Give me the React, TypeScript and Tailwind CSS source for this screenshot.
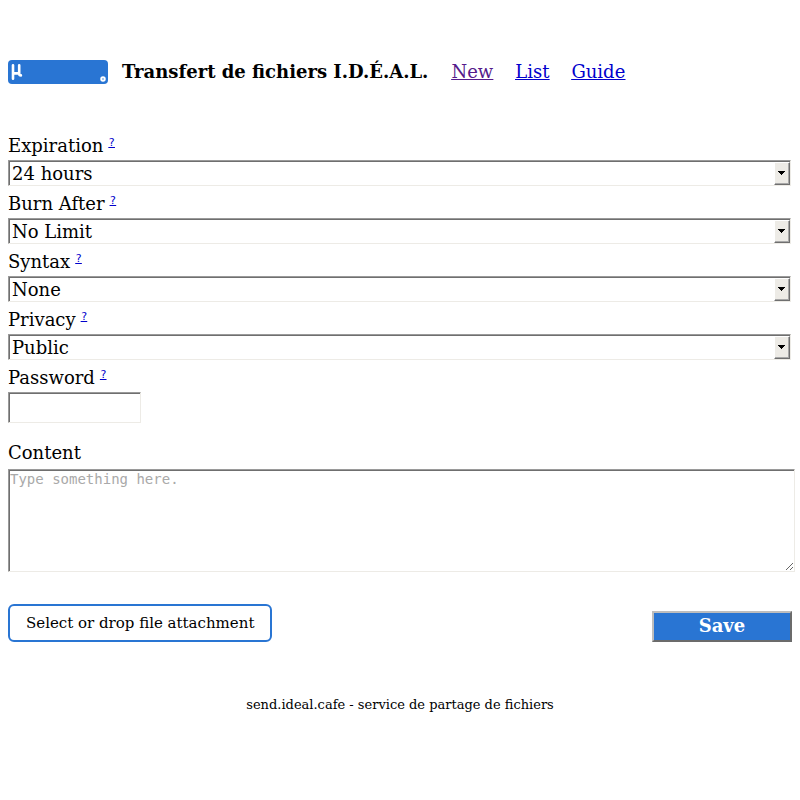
import React, { useState } from "react";

const insetBorder =
  "border border-t-[#9a9a9a] border-l-[#9a9a9a] border-b-[#edebe6] border-r-[#edebe6] shadow-[inset_1px_1px_0_#6f6f6f]";

const selectFields = [
  { id: "expiration", label: "Expiration", options: ["24 hours", "1 hour", "3 days", "1 week"] },
  { id: "burn-after", label: "Burn After", options: ["No Limit", "1", "10", "100"] },
  { id: "syntax", label: "Syntax", options: ["None", "Auto", "Markdown"] },
  { id: "privacy", label: "Privacy", options: ["Public", "Unlisted", "Private"] },
];

const Logo = () => (
  <svg width="100" height="24" viewBox="0 0 100 24" aria-label="Logo">
    <rect width="100" height="24" rx="4" fill="#2975d3" />
    <path
      d="M5 5.2v13.6M5 13.4h6.2M11.2 5.2v8.2q0 2 1.7 2"
      fill="none"
      stroke="#fff"
      strokeWidth="2.6"
      strokeLinecap="round"
      strokeLinejoin="round"
    />
    <circle cx="95" cy="19" r="1.9" fill="#8db6e8" stroke="#fff" strokeWidth="1.7" />
  </svg>
);

const FieldLabel = ({ htmlFor, label }: { htmlFor: string; label: string }) => (
  <div className="flex h-8 items-center pt-1">
    <label htmlFor={htmlFor}>{label}</label>
    <a
      href="/guide"
      className="mb-[7px] ml-[5px] font-['DejaVu_Sans_Mono',monospace] text-[11px] leading-3 text-[#0000cc] underline"
    >
      ?
    </a>
  </div>
);

const SelectField = ({ id, label, options }: { id: string; label: string; options: string[] }) => (
  <div className="mr-px">
    <FieldLabel htmlFor={id} label={label} />
    <div className="relative">
      <select id={id} className={`block h-[26px] w-full appearance-none bg-white pt-px pl-[3px] ${insetBorder}`}>
        {options.map((option) => (
          <option key={option}>{option}</option>
        ))}
      </select>
      <span className="pointer-events-none absolute top-0.5 right-px bottom-px flex w-4 items-center justify-center border border-t-white border-r-[#6f6f6f] border-b-[#6f6f6f] border-l-white bg-[#edebe6] pr-px pb-px shadow-[inset_-1px_-1px_0_#a8a8a8]">
        <svg width="7" height="4" viewBox="0 0 7 4" shapeRendering="crispEdges">
          <path d="M0 0h7v1H6v1H5v1H4v1H3V3H2V2H1V1H0z" />
        </svg>
      </span>
    </div>
  </div>
);

export default function App() {
  const [content, setContent] = useState("");

  return (
    <div className="bg-white px-2 pt-[60px] font-['DejaVu_Serif',serif] text-lg leading-6 text-black">
      {/* Header */}
      <header className="flex items-center">
        <Logo />
        <b className="ml-3.5">Transfert de fichiers I.D.É.A.L.</b>
        <nav className="ml-[23px] flex gap-[22px] text-[#0000cc] underline">
          <a href="/" className="text-[#551a8b]">New</a>
          <a href="/list">List</a>
          <a href="/guide">Guide</a>
        </nav>
      </header>

      <form className="mt-11" onSubmit={(e) => e.preventDefault()}>
        {selectFields.map((field) => (
          <SelectField key={field.id} {...field} />
        ))}
        <FieldLabel htmlFor="password" label="Password" />
        <input id="password" type="password" className={`block h-[31px] w-[133px] ${insetBorder}`} />

        {/* Content */}
        <label htmlFor="content" className="mt-[18px] block">Content</label>
        <textarea
          id="content"
          value={content}
          onChange={(e) => setContent(e.target.value)}
          placeholder="Type something here."
          className={`-mr-1 mt-1 block h-[103px] w-[calc(100%+3px)] px-px pt-px font-['DejaVu_Sans_Mono',monospace] text-sm leading-4 placeholder:text-[#a9a9a9] ${insetBorder}`}
        />

        {/* Attachment + Save */}
        <div className="mt-8 flex items-end justify-between">
          <label
            htmlFor="file"
            className="rounded-md border-2 border-[#2975d3] px-4 py-[7px] text-[15px] leading-5"
          >
            Select or drop file attachment
            <input id="file" type="file" className="sr-only" />
          </label>
          <button
            type="submit"
            className="h-[31px] w-[140px] border-2 border-t-[#bdbdbd] border-r-[#6b6b6b] border-b-[#6b6b6b] border-l-[#bdbdbd] bg-[#2975d3] pb-0.5 font-bold text-white"
          >
            Save
          </button>
        </div>
      </form>

      <footer className="mt-[55px] text-center text-[13px] leading-4">
        send.ideal.cafe - service de partage de fichiers
      </footer>
    </div>
  );
}
